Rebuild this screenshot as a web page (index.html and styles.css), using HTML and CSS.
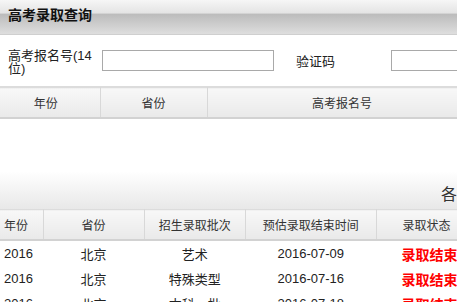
FILE: index.html
```html
<!DOCTYPE html>
<html lang="zh-CN">
<head>
    <meta charset="UTF-8">
    <meta name="viewport" content="width=device-width, initial-scale=1.0">
    <title>高考录取查询</title>
    <link rel="stylesheet" href="styles.css">
</head>
<body>
    <div class="title-bar">高考录取查询</div>

    <div class="search-row">
        <label class="field-label" for="exam-no">高考报名号(14位)</label>
        <input type="text" id="exam-no" class="field-input">
        <label class="code-label" for="check-code">验证码</label>
        <input type="text" id="check-code" class="field-input code-input">
    </div>

    <table class="grid grid-top">
        <colgroup>
            <col style="width: 100px">
            <col style="width: 107px">
            <col style="width: 270px">
        </colgroup>
        <thead>
            <tr>
                <th>年份</th>
                <th>省份</th>
                <th>高考报名号</th>
            </tr>
        </thead>
        <tbody></tbody>
    </table>

    <div class="band">各批次录取状态</div>

    <table class="grid grid-status">
        <colgroup>
            <col style="width: 43px">
            <col style="width: 101px">
            <col style="width: 101px">
            <col style="width: 131px">
            <col style="width: 100px">
        </colgroup>
        <thead>
            <tr>
                <th class="year">年份</th>
                <th>省份</th>
                <th>招生录取批次</th>
                <th>预估录取结束时间</th>
                <th>录取状态</th>
            </tr>
        </thead>
        <tbody>
            <tr>
                <td class="year">2016</td>
                <td>北京</td>
                <td>艺术</td>
                <td>2016-07-09</td>
                <td class="done">录取结束</td>
            </tr>
            <tr>
                <td class="year">2016</td>
                <td>北京</td>
                <td>特殊类型</td>
                <td>2016-07-16</td>
                <td class="done">录取结束</td>
            </tr>
            <tr>
                <td class="year">2016</td>
                <td>北京</td>
                <td>本科一批</td>
                <td>2016-07-18</td>
                <td class="done">录取结束</td>
            </tr>
        </tbody>
    </table>
</body>
</html>
```

FILE: styles.css
```css
html, body {
    overflow: hidden;
}
body {
    margin: 0;
    font-family: "Liberation Sans", "Noto Sans CJK SC", sans-serif;
    font-size: 13px;
    color: #222;
    background: #fff;
}
.title-bar {
    height: 34px;
    line-height: 30px;
    padding-left: 8px;
    font-size: 14px;
    font-weight: bold;
    color: #111;
    border-bottom: 1px solid #cfcfcf;
    background: linear-gradient(#f6f6f6 0, #e4e4e4 38%, #bcbcbc 42%, #d2d2d2 80%, #dedede 100%);
}
.search-row {
    display: flex;
    align-items: center;
    height: 51px;
    padding-left: 8px;
    border-bottom: 1px solid #dcdcdc;
}
.search-row > * {
    flex-shrink: 0;
}
.field-label {
    box-sizing: border-box;
    width: 94px;
    line-height: 13px;
    padding-top: 3px;
}
.field-input {
    box-sizing: border-box;
    width: 172px;
    height: 21px;
    border: 1px solid #a9a9a9;
    margin: 0;
    padding: 0 3px;
}
.code-label {
    margin-left: 22px;
    width: 95px;
    white-space: nowrap;
}
.code-input {
    width: 120px;
}
.grid {
    border-collapse: collapse;
    table-layout: fixed;
    width: 477px;
}
.grid th {
    height: 29px;
    padding: 0;
    font-weight: normal;
    font-size: 12px;
    color: #333;
    background: linear-gradient(#f8f8f8, #e9e9e9);
    border-top: 1px solid #dcdcdc;
    border-bottom: 2px solid #d2d2d2;
    border-right: 1px solid #d8d8d8;
}
.grid td {
    height: 25px;
    padding: 0;
    text-align: center;
}
.grid-top {
    margin-bottom: 52px;
}
.grid-top th:first-child {
    padding-right: 8px;
}
.band {
    height: 38px;
    padding: 10px 0 0 441px;
    box-sizing: border-box;
    font-size: 16px;
    color: #333;
    white-space: nowrap;
    overflow: hidden;
    background: linear-gradient(#fff, #e8e8e8);
}
.grid .year {
    text-align: left;
    padding-left: 4px;
}
.grid .done {
    color: #f00;
    font-weight: bold;
    font-size: 14px;
    padding-left: 6px;
}
```
